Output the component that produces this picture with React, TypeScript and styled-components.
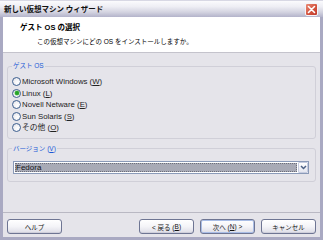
import React, { useState } from 'react';
import styled, { createGlobalStyle } from 'styled-components';

const GlobalStyle = createGlobalStyle`
  html, body {
    margin: 0;
    padding: 0;
    background: #ffffff;
  }
  body {
    font-family: "Liberation Sans", "Noto Sans CJK JP", sans-serif;
  }
`;

const osList = [
  { label: 'Microsoft Windows', key: 'W' },
  { label: 'Linux', key: 'L' },
  { label: 'Novell Netware', key: 'E' },
  { label: 'Sun Solaris', key: 'S' },
  { label: 'その他', key: 'O' },
];

const App: React.FC = () => {
  const [os, setOs] = useState('Linux');

  return (
    <>
      <GlobalStyle />
      <Window>
        <TitleBar>
          <TitleText>新しい仮想マシン ウィザード</TitleText>
          <CloseButton>
            <svg width="9" height="9" viewBox="0 0 9 9">
              <path d="M1.5 1.5 L7.5 7.5 M7.5 1.5 L1.5 7.5" stroke="#fff" strokeWidth="1.6" strokeLinecap="round" />
            </svg>
          </CloseButton>
        </TitleBar>
        <Frame>
          <Header>
            <HeaderTitle>ゲスト OS の選択</HeaderTitle>
            <HeaderSub>この仮想マシンにどの OS をインストールしますか。</HeaderSub>
          </Header>
          <Body>
            <Group>
              <Legend>ゲスト OS</Legend>
              {osList.map((item) => (
                <RadioRow key={item.key} onClick={() => setOs(item.label)}>
                  <RadioCircle checked={os === item.label} />
                  <RadioLabel>
                    {item.label} (<u>{item.key}</u>)
                  </RadioLabel>
                </RadioRow>
              ))}
            </Group>
            <Group second>
              <Legend>
                バージョン (<u>V</u>)
              </Legend>
              <Select>
                <SelectField>
                  <SelectText>Fedora</SelectText>
                </SelectField>
                <DropButton>
                  <svg width="7" height="5" viewBox="0 0 7 5">
                    <path d="M1 1 L3.5 3.5 L6 1" stroke="#4d6185" strokeWidth="1.5" fill="none" />
                  </svg>
                </DropButton>
              </Select>
            </Group>
          </Body>
          <Footer>
            <Button>ヘルプ</Button>
            <Spacer />
            <Button>
              &lt; 戻る (<u>B</u>)
            </Button>
            <Button primary>
              次へ (<u>N</u>) &gt;
            </Button>
            <Button>キャンセル</Button>
          </Footer>
        </Frame>
      </Window>
    </>
  );
};

const Window = styled.div`
  width: 323px;
  height: 240px;
  display: flex;
  flex-direction: column;
  background: #a9a9c2;
  overflow: hidden;
`;

const TitleBar = styled.div`
  height: 17px;
  flex-shrink: 0;
  display: flex;
  align-items: center;
  justify-content: space-between;
  padding: 0 5px 0 4px;
  box-sizing: border-box;
  background: linear-gradient(#fbfbfd 0%, #eeeef4 35%, #d3d3e0 70%, #b3b3ca 100%);
  border-top: 1px solid #d8d8e4;
`;

const TitleText = styled.span`
  font-family: "Noto Sans CJK JP", sans-serif;
  font-size: 7.5px;
  font-weight: 700;
  color: #111;
  line-height: 12px;
`;

const CloseButton = styled.div`
  width: 13px;
  height: 13px;
  box-sizing: border-box;
  border: 1px solid #f4f4f8;
  border-radius: 2px;
  background: linear-gradient(135deg, #e98a76 0%, #d3543f 55%, #c0392b 100%);
  display: flex;
  align-items: center;
  justify-content: center;
  margin-top: 1px;
`;

const Frame = styled.div`
  flex: 1;
  display: flex;
  flex-direction: column;
  border: 3px solid #a9a9c2;
  border-top: none;
  background: #e5e4ea;
`;

const Header = styled.div`
  height: 36px;
  box-sizing: border-box;
  background: #ffffff;
  border-bottom: 1px solid #c4c3cc;
  padding: 5px 0 0 17px;
`;

const HeaderTitle = styled.div`
  font-family: "Liberation Sans", "Noto Sans CJK JP", sans-serif;
  font-size: 7.5px;
  font-weight: 700;
  line-height: 12px;
  color: #000;
`;

const HeaderSub = styled.div`
  font-family: "Liberation Sans", "Noto Sans CJK JP", sans-serif;
  font-size: 6.5px;
  line-height: 11px;
  margin: 2px 0 0 17px;
  color: #000;
`;

const Body = styled.div`
  flex: 1;
  padding: 8px 4px 0;
  display: flex;
  flex-direction: column;
`;

const Group = styled.fieldset<{ second?: boolean }>`
  margin: ${({ second }) => (second ? '5px 0 0' : '0')};
  padding: ${({ second }) => (second ? '7px 6px 7px 4px' : '5px 4px 4px 4px')};
  border: 1px solid #d0cfd8;
  border-radius: 3px;
  min-width: 0;
`;

const Legend = styled.legend`
  padding: 0 1px;
  font-family: "Liberation Sans", "Noto Sans CJK JP", sans-serif;
  font-size: 6.5px;
  line-height: 10px;
  color: #1b5ad6;
`;

const RadioRow = styled.div`
  height: 11.5px;
  display: flex;
  align-items: center;
  gap: 1px;
  cursor: default;
`;

const RadioCircle = styled.span<{ checked: boolean }>`
  width: 9px;
  height: 9px;
  box-sizing: border-box;
  border-radius: 50%;
  border: 1px solid #3d5f8f;
  background: radial-gradient(circle at 65% 65%, #ffffff 0%, #f3f3f6 45%, #d8d8e0 100%);
  display: flex;
  align-items: center;
  justify-content: center;
  &::after {
    content: '';
    display: ${({ checked }) => (checked ? 'block' : 'none')};
    width: 4px;
    height: 4px;
    border-radius: 50%;
    background: #25a226;
    box-shadow: 0 0 0 0.5px #6ccc6c;
  }
`;

const RadioLabel = styled.span`
  font-family: "Liberation Sans", "Noto Sans CJK JP", sans-serif;
  font-size: 7.8px;
  line-height: 11px;
  color: #222;
  white-space: nowrap;
`;

const Select = styled.div`
  height: 13px;
  box-sizing: border-box;
  border: 1px solid #8a9ab8;
  background: #ffffff;
  display: flex;
  margin-left: 1px;
`;

const SelectField = styled.div`
  flex: 1;
  margin: 1px;
  background: #a8aab6;
  outline: 1px dotted #6c6e7a;
  outline-offset: -1px;
  display: flex;
  align-items: center;
`;

const SelectText = styled.span`
  font-family: "Liberation Sans", sans-serif;
  font-size: 8px;
  line-height: 9px;
  color: #15151a;
  padding-left: 1px;
`;

const DropButton = styled.div`
  width: 10px;
  box-sizing: border-box;
  border: 1px solid #c6cce0;
  border-radius: 1px;
  background: linear-gradient(#ffffff, #e4e6f0);
  display: flex;
  align-items: center;
  justify-content: center;
`;

const Footer = styled.div`
  height: 25px;
  box-sizing: border-box;
  border-top: 1px solid #b9b8c3;
  padding: 6px 4px 3px 4px;
  display: flex;
  gap: 6px;
`;

const Spacer = styled.div`
  flex: 1;
`;

const Button = styled.div<{ primary?: boolean }>`
  width: 55px;
  height: 15px;
  box-sizing: border-box;
  border: 1px solid #6e7593;
  border-radius: 3px;
  background: linear-gradient(#ffffff 0%, #f4f4f8 50%, #dddde6 100%);
  box-shadow: ${({ primary }) => (primary ? 'inset 0 0 0 1px #a9bde6' : 'inset 0 -1px 0 #cfcfdb')};
  display: flex;
  align-items: center;
  justify-content: center;
  font-family: "Liberation Sans", "Noto Sans CJK JP", sans-serif;
  font-size: 6.5px;
  color: #111;
  white-space: nowrap;
`;

export default App;
